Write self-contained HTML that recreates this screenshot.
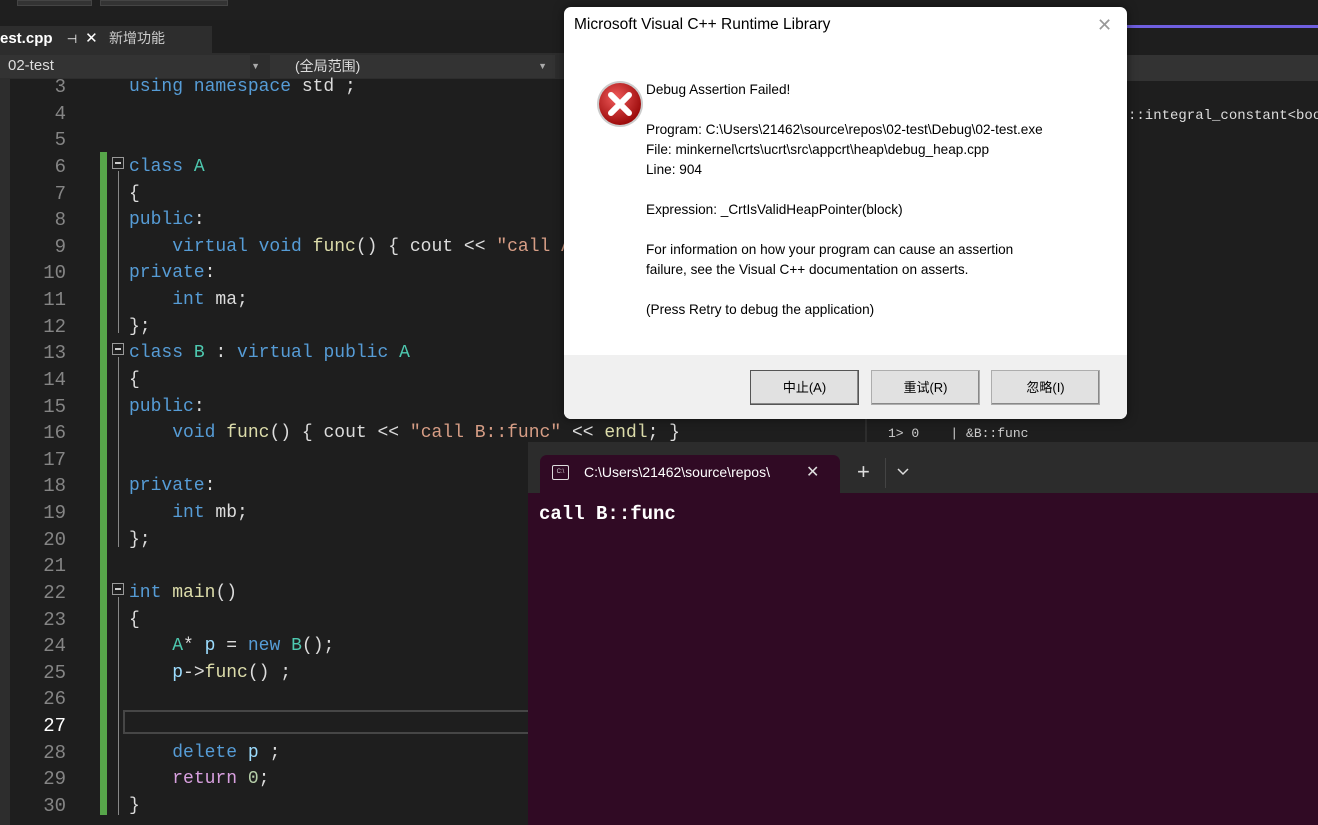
<!DOCTYPE html>
<html><head><meta charset="utf-8"><style>
*{margin:0;padding:0;box-sizing:border-box}
html,body{width:1318px;height:825px;overflow:hidden}
body{background:#1e1e1e;position:relative;font-family:"Liberation Sans","Noto Sans CJK SC",sans-serif}
.abs{position:absolute}
.code{position:absolute;left:0;top:74px;width:860px;font-family:"Liberation Mono","Noto Sans CJK SC",monospace;font-size:18px;line-height:26.63px;color:#dcdcdc}
.code>div{position:relative;height:26.63px;white-space:pre}
.ln{position:absolute;left:0;width:66px;text-align:right;color:#858585;font-size:19px}
.t{position:absolute;left:129px}
.k{color:#569cd6}.c{color:#4ec9b0}.f{color:#dcdcaa}.s{color:#d69d85}.v{color:#9cdcfe}.r{color:#d8a0df}.n{color:#b5cea8}
.dlg{font-family:"Liberation Sans","Noto Sans CJK SC",sans-serif;font-size:14px;color:#000}
.btn{position:absolute;top:370px;width:109px;height:35px;background:#e1e1e1;border:1px solid #adadad;box-shadow:inset -1px -1px #888;font-size:13px;text-align:center;line-height:33px;color:#000}
</style></head><body>
<div class="abs" style="left:0;top:0;width:1318px;height:20px;background:#1f1f1f"></div>
<div class="abs" style="left:17px;top:0;width:75px;height:6px;background:#333;border:1px solid #444"></div>
<div class="abs" style="left:100px;top:0;width:128px;height:6px;background:#333;border:1px solid #444"></div>
<div class="abs" style="left:0;top:20px;width:1318px;height:33px;background:#1e1e1e"></div>
<div class="abs" style="left:0;top:26px;width:98px;height:27px;background:#2d2d2d;color:#fff;font-size:15px;font-weight:bold;line-height:26px;white-space:nowrap">est.cpp <span style="font-weight:normal;font-size:12px;margin-left:10px">⊣</span><span style="font-weight:normal;margin-left:8px">✕</span></div>
<div class="abs" style="left:98px;top:26px;width:114px;height:27px;background:#2d2d2d;color:#ccc;font-size:14px;line-height:24px;padding-left:11px">新增功能</div>
<div class="abs" style="left:0;top:53px;width:860px;height:26px;background:#2d2d2d"></div>
<div class="abs" style="left:0;top:55px;width:250px;height:23px;background:#333;color:#ddd;font-size:15px;line-height:22px;padding-left:8px">02-test<span style="position:absolute;right:-10px;font-size:9px;color:#aaa">▼</span></div>
<div class="abs" style="left:270px;top:55px;width:285px;height:23px;background:#333;color:#ddd;font-size:14px;line-height:22px;padding-left:25px">(全局范围)<span style="position:absolute;right:8px;font-size:9px;color:#aaa">▼</span></div>
<div class="abs" style="left:0;top:79px;width:10px;height:746px;background:#2d2d2d"></div>
<div class="abs" style="left:100px;top:152px;width:7px;height:663px;background:#57a64a"></div>
<div class="code">
<div><span class="ln">3</span><span class="t"><span class="k">using namespace</span> std ;</span></div>
<div><span class="ln">4</span></div>
<div><span class="ln">5</span></div>
<div><span class="ln">6</span><span class="t"><span class="k">class</span> <span class="c">A</span></span></div>
<div><span class="ln">7</span><span class="t">{</span></div>
<div><span class="ln">8</span><span class="t"><span class="k">public</span>:</span></div>
<div><span class="ln">9</span><span class="t">    <span class="k">virtual void</span> <span class="f">func</span>() { cout &lt;&lt; <span class="s">"call A</span></span></div>
<div><span class="ln">10</span><span class="t"><span class="k">private</span>:</span></div>
<div><span class="ln">11</span><span class="t">    <span class="k">int</span> ma;</span></div>
<div><span class="ln">12</span><span class="t">};</span></div>
<div><span class="ln">13</span><span class="t"><span class="k">class</span> <span class="c">B</span> : <span class="k">virtual public</span> <span class="c">A</span></span></div>
<div><span class="ln">14</span><span class="t">{</span></div>
<div><span class="ln">15</span><span class="t"><span class="k">public</span>:</span></div>
<div><span class="ln">16</span><span class="t">    <span class="k">void</span> <span class="f">func</span>() { cout &lt;&lt; <span class="s">"call B::func"</span> &lt;&lt; <span class="f">endl</span>; }</span></div>
<div><span class="ln">17</span></div>
<div><span class="ln">18</span><span class="t"><span class="k">private</span>:</span></div>
<div><span class="ln">19</span><span class="t">    <span class="k">int</span> mb;</span></div>
<div><span class="ln">20</span><span class="t">};</span></div>
<div><span class="ln">21</span></div>
<div><span class="ln">22</span><span class="t"><span class="k">int</span> <span class="f">main</span>()</span></div>
<div><span class="ln">23</span><span class="t">{</span></div>
<div><span class="ln">24</span><span class="t">    <span class="c">A</span>* <span class="v">p</span> = <span class="k">new</span> <span class="c">B</span>();</span></div>
<div><span class="ln">25</span><span class="t">    <span class="v">p</span>-&gt;<span class="f">func</span>() ;</span></div>
<div><span class="ln">26</span></div>
<div><span class="ln" style="color:#fff">27</span></div>
<div><span class="ln">28</span><span class="t">    <span class="k">delete</span> <span class="v">p</span> ;</span></div>
<div><span class="ln">29</span><span class="t">    <span class="r">return</span> <span class="n">0</span>;</span></div>
<div><span class="ln">30</span><span class="t">}</span></div>
</div>
<div class="abs" style="left:112px;top:157px;width:12px;height:12px;border:1px solid #999"><div style="margin:4px 2px;height:2px;background:#ccc"></div></div>
<div class="abs" style="left:112px;top:343px;width:12px;height:12px;border:1px solid #999"><div style="margin:4px 2px;height:2px;background:#ccc"></div></div>
<div class="abs" style="left:112px;top:583px;width:12px;height:12px;border:1px solid #999"><div style="margin:4px 2px;height:2px;background:#ccc"></div></div>
<div class="abs" style="left:118px;top:171px;width:1px;height:162px;background:#888"></div>
<div class="abs" style="left:118px;top:357px;width:1px;height:190px;background:#888"></div>
<div class="abs" style="left:118px;top:597px;width:1px;height:218px;background:#888"></div>
<div class="abs" style="left:123px;top:710px;width:410px;height:24px;border:2px solid #464646"></div>
<div class="abs" style="left:860px;top:0;width:458px;height:442px;background:#1e1e1e"></div>
<div class="abs" style="left:1127px;top:25px;width:191px;height:3px;background:#6f5fe0"></div>
<div class="abs" style="left:1127px;top:55px;width:191px;height:26px;background:#333"></div>
<div class="abs" style="left:1128px;top:108px;font-family:'Liberation Mono',monospace;font-size:14px;color:#ddd;white-space:nowrap">::integral_constant&lt;bool</div>
<div class="abs" style="left:865px;top:410px;width:2px;height:32px;background:#2d2d2d"></div>
<div class="abs" style="left:888px;top:426px;font-family:'Liberation Mono',monospace;font-size:13px;color:#ccc;white-space:pre">1&gt; 0    | &amp;B::func</div>
<div class="abs" style="left:528px;top:442px;width:790px;height:383px;background:#300a24"></div>
<div class="abs" style="left:528px;top:442px;width:790px;height:51px;background:#2c2c2c"></div>
<div class="abs" style="left:540px;top:455px;width:300px;height:38px;background:#300a24;border-radius:7px 7px 0 0"></div>
<div class="abs" style="left:552px;top:465px;width:17px;height:15px;border:1.5px solid #ddd;border-radius:2px;font-size:6px;color:#ddd;line-height:12px;text-align:center">C:\</div>
<div class="abs" style="left:584px;top:464px;color:#fff;font-size:14px;white-space:nowrap">C:\Users\21462\source\repos\</div>
<div class="abs" style="left:806px;top:462px;color:#ddd;font-size:16px">✕</div>
<div class="abs" style="left:857px;top:459px;color:#ddd;font-size:22px">+</div>
<div class="abs" style="left:885px;top:458px;width:1px;height:30px;background:#444"></div>
<svg class="abs" style="left:897px;top:468px" width="12" height="8"><path d="M1 1L6 6L11 1" stroke="#ddd" stroke-width="1.5" fill="none"/></svg>
<div class="abs" style="left:539px;top:503px;color:#fff;font-family:'Liberation Mono',monospace;font-size:19px;font-weight:bold">call B::func</div>
<div class="abs dlg" style="left:564px;top:7px;width:563px;height:412px;background:#fff;border-radius:7px;overflow:hidden;box-shadow:0 0 10px rgba(0,0,0,.5)">
  <div class="abs" style="left:10px;top:9px;font-size:15.5px;white-space:nowrap">Microsoft Visual C++ Runtime Library</div>
  <div class="abs" style="left:533px;top:8px;font-size:18px;color:#999">✕</div>
  <svg class="abs" style="left:31px;top:72px" width="50" height="50" viewBox="0 0 50 50"><defs><radialGradient id="g" cx="40%" cy="35%" r="65%"><stop offset="0" stop-color="#f05a5a"/><stop offset="1" stop-color="#9c0b0b"/></radialGradient></defs><circle cx="25" cy="25" r="23" fill="#ccc"/><circle cx="25" cy="25" r="21" fill="url(#g)"/><path d="M16 16L34 34M34 16L16 34" stroke="#fff" stroke-width="6" stroke-linecap="round"/></svg>
  <div class="abs" style="left:82px;top:73px;line-height:20px;font-size:13.6px;white-space:nowrap">Debug Assertion Failed!<br><br>Program: C:\Users\21462\source\repos\02-test\Debug\02-test.exe<br>File: minkernel\crts\ucrt\src\appcrt\heap\debug_heap.cpp<br>Line: 904<br><br>Expression: _CrtIsValidHeapPointer(block)<br><br>For information on how your program can cause an assertion<br>failure, see the Visual C++ documentation on asserts.<br><br>(Press Retry to debug the application)</div>
  <div class="abs" style="left:0;top:348px;width:563px;height:64px;background:#f0f0f0"></div>
</div>
<div class="btn" style="left:750px;border-color:#555">中止(A)</div>
<div class="btn" style="left:871px">重试(R)</div>
<div class="btn" style="left:991px">忽略(I)</div>
</body></html>
